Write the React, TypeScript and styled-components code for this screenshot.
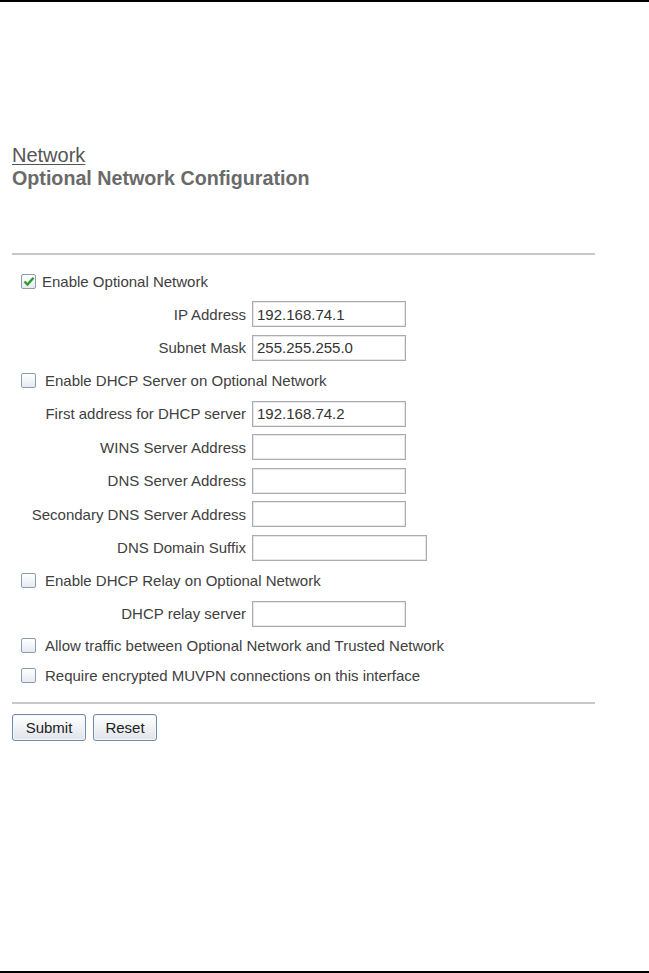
import React from 'react';
import styled, { createGlobalStyle } from 'styled-components';

const Global = createGlobalStyle`
  html, body {
    margin: 0;
    padding: 0;
    background: #fff;
  }
  body {
    font-family: "Liberation Sans", Arial, sans-serif;
  }
`;

const Page = styled.div`
  box-sizing: border-box;
  width: 649px;
  height: 973px;
  border-top: 2px solid #000;
  border-bottom: 2px solid #000;
  padding: 143px 0 0 12px;
`;

const Crumb = styled.a`
  display: block;
  width: max-content;
  font-size: 20px;
  line-height: 21px;
  color: #555;
  text-decoration: underline;
  text-underline-offset: 2px;
  text-decoration-thickness: 1px;
`;

const Title = styled.h1`
  margin: 1px 0 0;
  font-size: 19.7px;
  line-height: 22px;
  font-weight: bold;
  color: #6a6a6a;
`;

const Rule = styled.div<{ $gap: number }>`
  width: 583px;
  height: 2px;
  background: #c8c8c8;
  margin-top: ${(p) => p.$gap}px;
`;

const Form = styled.form`
  display: flex;
  flex-direction: column;
  padding-top: 10px;
  color: #404040;
  font-size: 15px;
`;

const CheckRow = styled.label<{ $h: number; $gap: number }>`
  display: flex;
  align-items: center;
  height: ${(p) => p.$h}px;
  padding-left: 9px;
  gap: ${(p) => p.$gap}px;
  white-space: nowrap;
`;

const Box = styled.span`
  box-sizing: border-box;
  width: 15px;
  height: 15px;
  border: 1px solid #8c9cb0;
  border-radius: 2px;
  background: linear-gradient(#ffffff, #e6eaef);
  display: flex;
  align-items: center;
  justify-content: center;
`;

const FieldRow = styled.div`
  display: flex;
  align-items: center;
  height: 33.5px;
`;

const FieldLabel = styled.span`
  width: 234px;
  text-align: right;
  margin-right: 6px;
  white-space: nowrap;
`;

const Input = styled.input<{ $w: number }>`
  box-sizing: border-box;
  width: ${(p) => p.$w}px;
  height: 26px;
  border: 1px solid #a9adb2;
  box-shadow: inset 0 0 0 1px #e4e6e8;
  padding: 0 4px;
  font-family: "Liberation Sans", Arial, sans-serif;
  font-size: 15px;
  color: #333;
  background: #fff;
  outline: none;
`;

const Buttons = styled.div`
  display: flex;
  gap: 7px;
  margin-top: 10px;
`;

const Button = styled.button<{ $w: number }>`
  box-sizing: border-box;
  width: ${(p) => p.$w}px;
  height: 27px;
  border: 1px solid #6f8aa8;
  border-radius: 3px;
  background: linear-gradient(#ffffff, #dfe4ea);
  box-shadow: inset 0 0 0 1px #f4f6f8;
  font-family: "Liberation Sans", Arial, sans-serif;
  font-size: 15px;
  color: #222;
  padding: 0;
`;

const Check = ({ on }: { on?: boolean }) => (
  <Box>
    {on && (
      <svg width="12" height="11" viewBox="0 0 12 11">
        <path d="M1.5 5.5 L4.5 8.6 L10.5 1.8" fill="none" stroke="#2e9a2e" strokeWidth="2.4" />
      </svg>
    )}
  </Box>
);

type Item =
  | { kind: 'check'; text: string; on?: boolean; h?: number; gap?: number }
  | { kind: 'field'; text: string; value?: string; w?: number };

const items: Item[] = [
  { kind: 'check', text: 'Enable Optional Network', on: true, gap: 6 },
  { kind: 'field', text: 'IP Address', value: '192.168.74.1' },
  { kind: 'field', text: 'Subnet Mask', value: '255.255.255.0' },
  { kind: 'check', text: 'Enable DHCP Server on Optional Network' },
  { kind: 'field', text: 'First address for DHCP server', value: '192.168.74.2' },
  { kind: 'field', text: 'WINS Server Address' },
  { kind: 'field', text: 'DNS Server Address' },
  { kind: 'field', text: 'Secondary DNS Server Address' },
  { kind: 'field', text: 'DNS Domain Suffix', w: 175 },
  { kind: 'check', text: 'Enable DHCP Relay on Optional Network' },
  { kind: 'field', text: 'DHCP relay server' },
  { kind: 'check', text: 'Allow traffic between Optional Network and Trusted Network', h: 30 },
  { kind: 'check', text: 'Require encrypted MUVPN connections on this interface', h: 29 },
];

export default function App() {
  return (
    <Page>
      <Global />
      <Crumb>Network</Crumb>
      <Title>Optional Network Configuration</Title>
      <Rule $gap={64} />
      <Form onSubmit={(e) => e.preventDefault()}>
        {items.map((it) =>
          it.kind === 'check' ? (
            <CheckRow key={it.text} $h={it.h ?? 32.5} $gap={it.gap ?? 9}>
              <Check on={it.on} />
              {it.text}
            </CheckRow>
          ) : (
            <FieldRow key={it.text}>
              <FieldLabel>{it.text}</FieldLabel>
              <Input $w={it.w ?? 154} defaultValue={it.value ?? ''} />
            </FieldRow>
          )
        )}
      </Form>
      <Rule $gap={12} />
      <Buttons>
        <Button $w={74}>Submit</Button>
        <Button $w={64}>Reset</Button>
      </Buttons>
    </Page>
  );
}
